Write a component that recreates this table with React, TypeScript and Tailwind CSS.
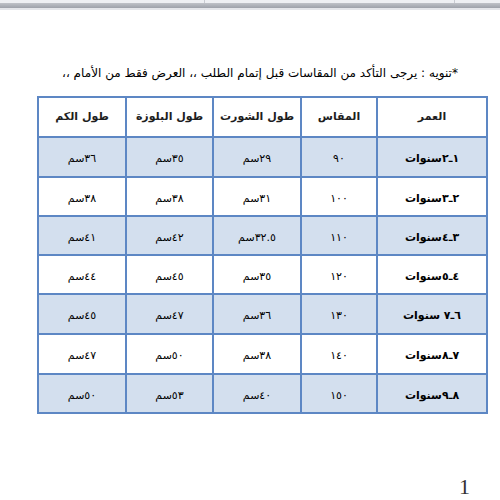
import React from "react";

const header = ["العمر", "المقاس", "طول الشورت", "طول البلوزة", "طول الكم"];
const rows: string[][] = [
  ["١ـ٢سنوات", "٩٠", "٢٩سم", "٣٥سم", "٣٦سم"],
  ["٢ـ٣سنوات", "١٠٠", "٣١سم", "٣٨سم", "٣٨سم"],
  ["٣ـ٤سنوات", "١١٠", "٣٢.٥سم", "٤٢سم", "٤١سم"],
  ["٤ـ٥سنوات", "١٢٠", "٣٥سم", "٤٥سم", "٤٤سم"],
  ["٦ـ٧ سنوات", "١٣٠", "٣٦سم", "٤٧سم", "٤٥سم"],
  ["٧ـ٨سنوات", "١٤٠", "٣٨سم", "٥٠سم", "٤٧سم"],
  ["٨ـ٩سنوات", "١٥٠", "٤٠سم", "٥٣سم", "٥٠سم"],
];
const rowH = ["h-[38px]", "h-[38px]", "h-[37px]", "h-[37px]", "h-[37px]", "h-[38px]", "h-[38px]", "h-[37px]"];

export default function App() {
  return (
    <div className="w-[500px] h-[500px] bg-white overflow-hidden relative" style={{ fontFamily: '"DejaVu Sans", sans-serif' }}>
      {/* top toolbar remnant */}
      <div className="h-[3px] bg-[#eef0f3] flex">
        <div className="w-[205px] border-r border-[#c9ccd2]" />
        <div className="w-[250px] border-r border-[#c9ccd2]" />
      </div>
      <div className="h-[5px] bg-gradient-to-b from-[#bfc2c8] to-[#9ea2aa]" />
      <div className="h-[2px] bg-[#e4e6ea]" />

      <div dir="rtl" className="mt-[55px] w-[500px] pl-[20px] text-center text-[12px] leading-[16px] text-black">
        *تنويه : يرجى التأكد من المقاسات قبل إتمام الطلب ،، العرض فقط من الأمام ،،
      </div>

      <div className="mt-[15px] ml-[37px] w-[451px] bg-[#5d87c4] p-[2px]" dir="rtl">
        <div className="grid grid-cols-[108px_74px_86px_85px_86px] gap-[2px]">
          {header.map((h, i) => (
            <div key={i} className={`${rowH[0]} bg-white flex items-center justify-center pt-[1px] text-[11px] font-bold text-[#1e1e1e]`}>
              {h}
            </div>
          ))}
          {rows.map((r, ri) =>
            r.map((c, ci) => (
              <div
                key={`${ri}-${ci}`}
                className={`${rowH[ri + 1]} ${ri % 2 === 0 ? "bg-[#d3dfee]" : "bg-white"} flex items-center justify-center pt-[5px] text-[11px] ${ci === 0 ? "font-bold" : ""} text-black`}
              >
                {c}
              </div>
            ))
          )}
        </div>
      </div>

      <div className="absolute left-[459px] top-[476px] text-[22px] leading-[22px] text-[#333]" style={{ fontFamily: '"Liberation Serif", serif' }}>
        1
      </div>
    </div>
  );
}
